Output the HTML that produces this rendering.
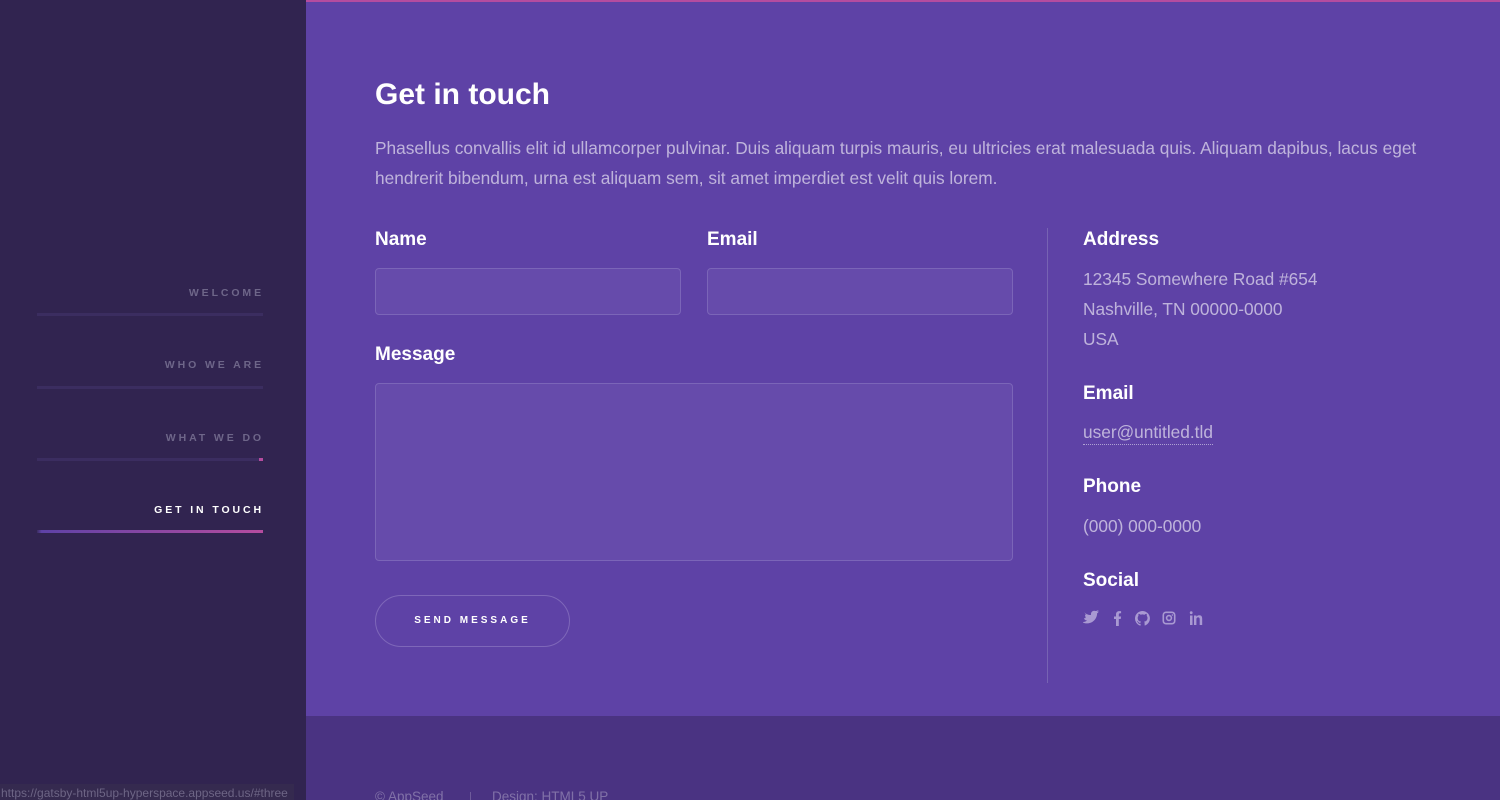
<!DOCTYPE html>
<html style="overflow:hidden;height:800px"><head><style>
*{box-sizing:border-box;margin:0;padding:0}
body{width:1500px;height:800px;overflow:hidden;background:#312450;font-family:"Liberation Sans",Arial,sans-serif;position:relative}
#side{position:absolute;left:0;top:0;width:306px;height:800px;background:#312450}
#side a{position:absolute;right:42px;width:226px;text-align:right;font-size:10.5px;font-weight:bold;letter-spacing:2.9px;color:#6e6689;text-decoration:none}
#side .ln{position:absolute;left:37px;width:226px;height:3px;background:#3b2d60}
#main{position:absolute;left:306px;top:0;width:1194px;height:716px;background:#5e42a6;border-top:2px solid #b54c9f}
#foot{position:absolute;left:306px;top:716px;width:1194px;height:84px;background:#4a3382;overflow:hidden}
h2{position:absolute;left:69px;top:76px;color:#fff;font-size:30px;font-weight:bold}
p.intro{position:absolute;left:69px;top:131px;width:1080px;color:rgba(255,255,255,.6);font-size:17.3px;line-height:30px}
.lbl{position:absolute;color:#fff;font-weight:bold;font-size:19px}
.in{position:absolute;background:#664bab;border:1px solid #7b65b8;border-radius:4px}
.btn{position:absolute;left:69px;top:593px;width:195px;height:52px;border:1px solid #7e67b9;border-radius:26px;color:#fff;font-size:10px;font-weight:bold;letter-spacing:3px;text-align:center;line-height:50px}
.vl{position:absolute;left:741px;top:226px;width:1px;height:455px;background:#7763b3}
.t{position:absolute;color:rgba(255,255,255,.6);font-size:17.3px;line-height:30px}
</style></head><body>
<div id="side">
<a style="top:287px">WELCOME</a><div class="ln" style="top:313px"></div>
<a style="top:359px">WHO WE ARE</a><div class="ln" style="top:386px"></div>
<a style="top:432px">WHAT WE DO</a><div class="ln" style="top:458px"></div><div style="position:absolute;left:259px;top:458px;width:4px;height:3px;background:#b54c9f"></div>
<a style="top:504px;color:#fff">GET IN TOUCH</a><div class="ln" style="top:530px;background:linear-gradient(90deg,#3b2d60 0,#5e42a6 2%,#b54c9f 100%)"></div>
<div style="position:absolute;left:0;top:784px;width:294px;height:16px;background:#352a4f;color:#6d6585;font-size:12px;line-height:18px;padding-left:1px;white-space:nowrap;overflow:hidden">https://gatsby-html5up-hyperspace.appseed.us/#three</div>
</div>
<div id="main">
<h2>Get in touch</h2>
<p class="intro">Phasellus convallis elit id ullamcorper pulvinar. Duis aliquam turpis mauris, eu ultricies erat malesuada quis. Aliquam dapibus, lacus eget hendrerit bibendum, urna est aliquam sem, sit amet imperdiet est velit quis lorem.</p>
<div class="lbl" style="left:69px;top:227px">Name</div>
<div class="lbl" style="left:401px;top:227px">Email</div>
<div class="in" style="left:69px;top:266px;width:306px;height:47px"></div>
<div class="in" style="left:401px;top:266px;width:306px;height:47px"></div>
<div class="lbl" style="left:69px;top:342px">Message</div>
<div class="in" style="left:69px;top:381px;width:638px;height:178px"></div>
<div class="btn">SEND MESSAGE</div>
<div class="vl"></div>
<div class="lbl" style="left:777px;top:227px">Address</div>
<div class="t" style="left:777px;top:262px">12345 Somewhere Road #654<br>Nashville, TN 00000-0000<br>USA</div>
<div class="lbl" style="left:777px;top:381px">Email</div>
<div class="t" style="left:777px;top:418px;border-bottom:1px dotted rgba(255,255,255,.5);line-height:24px">user@untitled.tld</div>
<div class="lbl" style="left:777px;top:474px">Phone</div>
<div class="t" style="left:777px;top:509px">(000) 000-0000</div>
<div class="lbl" style="left:777px;top:568px">Social</div>
<svg style="position:absolute;left:777px;top:606px" width="120" height="20" fill="#a999d2">
<path d="M1 4c2 2 4 3 7 3-.5-3 2-5 4.5-4 1 0 2-.5 3-1-.3 1-1 1.7-1.7 2 .8 0 1.5-.3 2.2-.6-.5.8-1.2 1.4-1.9 2 0 5-4 10-10 10-2 0-3.5-.5-5-1.5 2 .2 3.5-.3 5-1.4-1.6 0-2.8-1-3.2-2.3.5 0 1 0 1.5-.1C3 9.5 2 8.2 2 6.5c.5.3 1 .4 1.5.4C2.5 6 1.8 5 1 4z"/>
<path d="M33 18v-7h-2V8.5h2V6.5c0-2.2 1.3-3.4 3.3-3.4.9 0 1.8.1 1.8.1v2.1h-1c-1 0-1.3.6-1.3 1.3v1.9h2.3l-.4 2.5h-1.9v7z"/>
<path d="M59.5 3a7.5 7.5 0 0 0-2.4 14.6c.4 0 .5-.2.5-.4v-1.4c-2.1.5-2.5-1-2.5-1-.4-.9-.9-1.1-.9-1.1-.7-.5 0-.5 0-.5.8 0 1.2.8 1.2.8.7 1.2 1.8.8 2.2.6 0-.5.3-.8.5-1-1.700-.2-3.4-.8-3.4-3.7 0-.8.3-1.5.8-2-.1-.2-.3-1 .1-2 0 0 .6-.2 2.1.8a7 7 0 0 1 3.8 0c1.4-1 2.1-.8 2.1-.8.4 1 .2 1.8.1 2 .5.5.8 1.2.8 2 0 2.9-1.8 3.5-3.4 3.7.3.2.5.7.5 1.4v2.1c0 .2.1.4.5.4A7.5 7.5 0 0 0 59.5 3z"/>
<path d="M83 3.5h6a3.5 3.5 0 0 1 3.5 3.5v6A3.5 3.5 0 0 1 89 16.5h-6A3.5 3.5 0 0 1 79.5 13V7A3.5 3.5 0 0 1 83 3.5zm0 1.6A1.900 1.900 0 0 0 81.1 7v6c0 1 .9 1.9 1.9 1.9h6c1 0 1.9-.9 1.9-1.9V7c0-1-.9-1.9-1.9-1.9zm3 1.7a3.2 3.2 0 1 1 0 6.4 3.2 3.2 0 0 1 0-6.4zm0 1.6a1.6 1.6 0 1 0 0 3.2 1.6 1.6 0 0 0 0-3.2zm3.4-2.2a.8.8 0 1 1 0 1.6.8.8 0 0 1 0-1.6z"/>
<path d="M107 7.5h2.5V17H107zM108.2 3.3a1.4 1.4 0 1 1 0 2.8 1.4 1.4 0 0 1 0-2.8zM111 7.5h2.4v1.3c.4-.8 1.4-1.5 2.8-1.5 2.6 0 3 1.7 3 3.9V17h-2.5v-5.1c0-1.2 0-2.5-1.6-2.5s-1.7 1.2-1.7 2.5V17H111z"/>
</svg>
</div>
<div id="foot">
<div style="position:absolute;left:69px;top:73px;color:rgba(255,255,255,.3);font-size:13.5px">© AppSeed</div>
<div style="position:absolute;left:164px;top:76px;width:1px;height:14px;background:rgba(255,255,255,.2)"></div>
<div style="position:absolute;left:186px;top:73px;color:rgba(255,255,255,.3);font-size:13.5px">Design: HTML5 UP</div>
</div>
</body></html>
